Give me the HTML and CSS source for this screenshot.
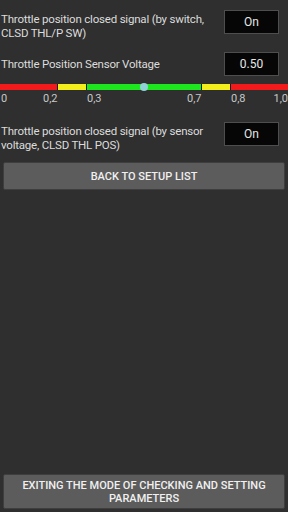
FILE: index.html
```html
<!DOCTYPE html>
<html lang="en">
<head>
  <meta charset="UTF-8">
  <meta name="viewport" content="width=device-width, initial-scale=1.0">
  <title>Throttle position</title>
  <link rel="stylesheet" href="styles.css">
</head>
<body>
  <div class="screen">
    <div class="row row-top">
      <div class="label">Throttle position closed signal (by switch, CLSD THL/P SW)</div>
      <div class="value">On</div>
    </div>
    <div class="row row-mid">
      <div class="label">Throttle Position Sensor Voltage</div>
      <div class="value">0.50</div>
    </div>

    <div class="gauge">
      <div class="bar">
        <div class="seg red" style="width:57px"></div>
        <div class="seg yellow" style="width:28px"></div>
        <div class="seg green" style="width:114px"></div>
        <div class="seg yellow" style="width:28px"></div>
        <div class="seg red" style="width:57px"></div>
        <div class="dot" style="left:140px"></div>
      </div>
      <div class="scale">
        <span style="left:1px">0</span>
        <span style="left:43px">0,2</span>
        <span style="left:87px">0,3</span>
        <span style="left:187px">0,7</span>
        <span style="left:231px">0,8</span>
        <span style="right:0">1,0</span>
      </div>
    </div>

    <div class="row row-top">
      <div class="label">Throttle position closed signal (by sensor voltage, CLSD THL POS)</div>
      <div class="value">On</div>
    </div>

    <button class="btn btn-back">BACK TO SETUP LIST</button>

    <button class="btn btn-exit">EXITING THE MODE OF CHECKING AND SETTING PARAMETERS</button>
  </div>
</body>
</html>
```

FILE: styles.css
```css
body {
    margin: 0;
    background-color: #2f2f2f;
    font-family: Roboto, "Liberation Sans", sans-serif;
    color: #dcdcdc;
}
.screen {
    display: flex;
    flex-direction: column;
    height: 512px;
    padding: 0 3px;
    box-sizing: border-box;
}
.row {
    display: flex;
    justify-content: space-between;
    margin-left: -2px;
}
.row-top {
    align-items: flex-start;
    margin-top: 10px;
}
.row-mid {
    align-items: center;
    margin-top: 12px;
}
.label {
    width: 212px;
    font-size: 11.5px;
    letter-spacing: -0.2px;
    line-height: 14px;
    margin-top: 2px;
}
.row-mid .label {
    margin-top: 0;
}
.value {
    width: 53px;
    height: 22px;
    margin-right: 6px;
    background: #060606;
    border: 1px solid #4e4e4e;
    display: flex;
    justify-content: center;
    align-items: center;
    font-size: 12px;
    color: #e6e6e6;
}
.gauge {
    margin: 8px -3px 0;
    height: 28px;
    position: relative;
}
.bar {
    display: flex;
    gap: 1px;
    height: 6px;
    background: #1a1a1a;
    position: relative;
}
.seg {
    height: 6px;
}
.red {
    background: #f21a1a;
}
.yellow {
    background: #f2ee1c;
}
.green {
    background: #1ee61e;
}
.dot {
    position: absolute;
    top: -1px;
    width: 8px;
    height: 8px;
    border-radius: 50%;
    background: #8fd3d8;
}
.scale {
    position: relative;
    height: 16px;
}
.scale span {
    position: absolute;
    top: 2px;
    font-size: 11px;
    color: #c8c8c8;
}
.btn {
    width: 100%;
    border: 1px solid #3e3e3e;
    background: #5c5c5c;
    color: #f0f0f0;
    font-family: Roboto, "Liberation Sans", sans-serif;
    font-size: 11px;
    font-weight: 500;
    text-align: center;
    border-radius: 2px;
}
.btn-back {
    margin-top: 10px;
    height: 28px;
}
.btn-exit {
    margin-top: auto;
    margin-bottom: 3px;
    height: 35px;
    line-height: 13px;
    padding: 0 8px;
}
```
